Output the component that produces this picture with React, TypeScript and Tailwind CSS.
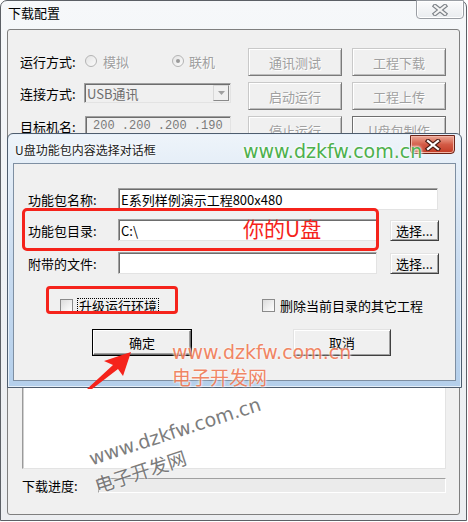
import React from "react";

const outerBtn =
  "flex h-[28px] w-[94px] items-center justify-center border border-[#c9c9c9] border-b-[#7a7a7a] border-r-[#7a7a7a] bg-[#f0f0f0] text-[#a0a0a0] shadow-[inset_1px_1px_0_#ffffff,inset_-1px_-1px_0_#bdbdbd] [text-shadow:1px_1px_0_#ffffff]";

const sunken =
  "border border-[#a0a0a0] border-b-[#e3e3e3] border-r-[#e3e3e3] shadow-[inset_1px_1px_0_#6d6d6d]";

function CloseX({ outline, fill }: { outline: string; fill: string }) {
  return (
    <svg width="16" height="12" viewBox="0 0 16 12">
      <path d="M3 2 L13 10 M13 2 L3 10" stroke={outline} strokeWidth="4.4" strokeLinecap="square" fill="none" />
      <path d="M3 2 L13 10 M13 2 L3 10" stroke={fill} strokeWidth="2.2" strokeLinecap="square" fill="none" />
    </svg>
  );
}

export default function App() {
  return (
    <div className="relative h-[522px] w-[468px] overflow-hidden bg-white font-['Noto_Sans_CJK_SC',sans-serif] text-[13px] leading-none text-black">
      {/* outer window */}
      <div className="flex h-[521px] w-[467px] flex-col rounded-t-[7px] border border-[#5c6066] bg-gradient-to-b from-[#f6f8fa] via-[#eef1f4] to-[#eceef1]">
        {/* title bar */}
        <div className="flex h-[28px] items-start">
          <span className="ml-[7px] mt-[5px] text-[13px] text-black">下载配置</span>
          <div className="ml-auto mr-[2px] mt-[-1px] flex h-[19px] w-[48px] items-center justify-center rounded-b-[4px] border border-[#9a9ea4] bg-gradient-to-b from-[#fbfbfc] to-[#e9ecef] shadow-[inset_0_0_0_1px_#ffffff]">
            <CloseX outline="#7d8288" fill="#f4f4f4" />
          </div>
        </div>
        {/* client area */}
        <div className="mx-[6px] mb-[5px] flex flex-1 flex-col rounded-[3px] border border-[#7f7f7f] bg-[#f0f0f0] pl-[12px] pt-[18px]">
          <div className="flex">
            <div className="flex w-[211px] flex-col gap-[6px]">
              <div className="flex h-[28px] items-center pb-[2px]">
                <span className="w-[64px]">运行方式:</span>
                <span className="ml-[1px] h-[12px] w-[12px] rounded-full border border-[#b4b4b4] bg-gradient-to-br from-[#e4e4e4] to-[#fbfbfb]" />
                <span className="ml-[6px] text-[#a0a0a0] [text-shadow:1px_1px_0_#ffffff]">模拟</span>
                <span className="ml-[43px] flex h-[12px] w-[12px] items-center justify-center rounded-full border border-[#b4b4b4] bg-gradient-to-br from-[#e4e4e4] to-[#fbfbfb]">
                  <span className="h-[4px] w-[4px] rounded-full bg-[#9a9a9a]" />
                </span>
                <span className="ml-[5px] text-[#a0a0a0] [text-shadow:1px_1px_0_#ffffff]">联机</span>
              </div>
              <div className="h-[28px] pt-[1px]">
                <div className="flex h-[20px] items-center">
                  <span className="w-[64px]">连接方式:</span>
                  <div className={`flex h-[20px] w-[147px] items-center bg-[#f0f0f0] ${sunken}`}>
                    <span className="ml-[2px] text-[#6d6d6d]">USB通讯</span>
                    <div className="ml-auto mr-[1px] flex h-[16px] w-[16px] items-center justify-center border border-[#d8d8d8] border-b-[#8a8a8a] border-r-[#8a8a8a] bg-[#f0f0f0]">
                      <svg width="7" height="4" viewBox="0 0 7 4"><path d="M0 0 H7 L3.5 4 Z" fill="#a0a0a0" /></svg>
                    </div>
                  </div>
                </div>
              </div>
              <div className="flex h-[20px] items-center">
                <span className="w-[65px]">目标机名:</span>
                <div className={`flex h-[20px] w-[146px] items-center bg-[#f0f0f0] pl-[7px] font-['Liberation_Mono',monospace] text-[12px] text-[#7a7a7a] ${sunken}`}>
                  <span className="whitespace-pre">200 .200 .200 .190</span>
                </div>
              </div>
            </div>
            <div className="ml-[17px] grid grid-cols-[94px_94px] gap-x-[10px] gap-y-[6px]">
              <div className={outerBtn}>通讯测试</div>
              <div className={outerBtn}>工程下载</div>
              <div className={outerBtn}>启动运行</div>
              <div className={outerBtn}>工程上传</div>
              <div className={outerBtn}>停止运行</div>
              <div className="flex h-[28px] w-[94px] items-center justify-center border border-[#6f6f6f] bg-[#f0f0f0] text-[#a0a0a0] shadow-[inset_1px_1px_0_#ffffff,inset_-1px_-1px_0_#bdbdbd] [text-shadow:1px_1px_0_#ffffff]">U盘包制作</div>
            </div>
          </div>
          <div className="ml-[2px] mt-[8px] h-[317px] w-[424px] border border-[#9a9a9a] border-b-[#e3e3e3] border-r-[#e3e3e3] bg-white shadow-[inset_1px_1px_0_#d0d0d0]" />
          <div className="ml-[2px] mt-[9px] flex items-center">
            <span className="w-[76px]">下载进度:</span>
            <div className="h-[15px] w-[348px] border border-[#a0a0a0] border-b-[#ffffff] border-r-[#ffffff] bg-[#ebebeb]" />
          </div>
        </div>
      </div>

      {/* dialog window */}
      <div className="absolute left-[7px] top-[133px] flex h-[255px] w-[455px] flex-col rounded-t-[6px] border border-[#4e5d6e] bg-gradient-to-b from-[#eef4fa] via-[#cadcf0] to-[#b4cfeb] shadow-[inset_0_0_0_1px_#e6f0fa]">
        <div className="flex h-[29px] items-start">
          <span className="ml-[7px] mt-[10px] text-[12px] text-[#1a1a1a] [text-shadow:0_0_4px_#ffffff,0_0_4px_#ffffff]">U盘功能包内容选择对话框</span>
          <div className="ml-auto mr-[6px] mt-[1px] flex h-[19px] w-[45px] items-center justify-center rounded-b-[4px] border border-[#6b2418] bg-gradient-to-b from-[#eba898] via-[#d35a45] to-[#c23a24] shadow-[inset_0_0_0_1px_#f3b6a8]">
            <CloseX outline="#4a1c14" fill="#ffffff" />
          </div>
        </div>
        <div className="mx-[5px] flex h-[218px] flex-col border border-[#7e8fa2] bg-[#f0f0f0] pl-[14px]">
          <div className="mt-[24px] flex h-[22px] items-center">
            <span className="w-[90px]">功能包名称:</span>
            <div className={`flex h-[22px] w-[320px] items-center bg-white pl-[2px] ${sunken}`}>E系列样例演示工程800x480</div>
          </div>
          <div className="mt-[9px] flex h-[22px] items-center">
            <span className="w-[90px]">功能包目录:</span>
            <div className={`flex h-[22px] w-[259px] items-center bg-white pl-[2px] ${sunken}`}>C:\</div>
            <div className="ml-[13px] flex h-[21px] w-[49px] items-center justify-center border border-[#e3e3e3] border-b-[#404040] border-r-[#404040] bg-[#f0f0f0] shadow-[inset_1px_1px_0_#ffffff,inset_-1px_-1px_0_#a0a0a0]">选择...</div>
          </div>
          <div className="mt-[11px] flex h-[22px] items-center">
            <span className="w-[90px]">附带的文件:</span>
            <div className={`h-[22px] w-[259px] bg-white ${sunken}`} />
            <div className="ml-[13px] flex h-[21px] w-[49px] items-center justify-center border border-[#e3e3e3] border-b-[#404040] border-r-[#404040] bg-[#f0f0f0] shadow-[inset_1px_1px_0_#ffffff,inset_-1px_-1px_0_#a0a0a0]">选择...</div>
          </div>
          <div className="mt-[24px] flex h-[14px] items-center">
            <span className="ml-[32px] h-[13px] w-[13px] border border-[#8a8a8a] bg-gradient-to-br from-[#dcdcdc] to-[#ffffff]" />
            <span className="ml-[4px] flex h-[15px] items-center border border-dotted border-black px-[1px]">升级运行环境</span>
            <span className="ml-[103px] h-[13px] w-[13px] border border-[#8a8a8a] bg-gradient-to-br from-[#dcdcdc] to-[#ffffff]" />
            <span className="ml-[5px]">删除当前目录的其它工程</span>
          </div>
          <div className="mt-[17px] flex">
            <div className="ml-[64px] flex h-[27px] w-[100px] border border-black bg-[#f0f0f0]">
              <div className="flex flex-1 items-center justify-center border border-[#ffffff] border-b-[#696969] border-r-[#696969] shadow-[inset_-1px_-1px_0_#a0a0a0]">确定</div>
            </div>
            <div className="ml-[101px] flex h-[27px] w-[98px] items-center justify-center border border-[#e3e3e3] border-b-[#404040] border-r-[#404040] bg-[#f0f0f0] shadow-[inset_1px_1px_0_#ffffff,inset_-1px_-1px_0_#a0a0a0]">取消</div>
          </div>
        </div>
      </div>

      {/* annotations */}
      <div className="absolute left-[22px] top-[208px] h-[43px] w-[357px] rounded-[5px] border-[3px] border-[#f5231b]" />
      <div className="absolute left-[46px] top-[286px] h-[28px] w-[132px] rounded-[4px] border-[3px] border-[#f5231b]" />
      <div className="absolute left-[243px] top-[218px] text-[21px] leading-none text-[#f5231b]">你的U盘</div>

      <div className="absolute left-[243px] top-[142px] font-['DejaVu_Sans',sans-serif] text-[19px] leading-none text-[#4db04d] [text-shadow:0_0_2px_#ffffff,0_0_3px_#ffffff,0_0_4px_#ffffff]">www.dzkfw.com.cn</div>

      <div className="absolute left-[172px] top-[343px] font-['DejaVu_Sans',sans-serif] text-[19px] leading-none text-[#f07a55] opacity-90 [text-shadow:0_0_2px_#ffffff,0_0_3px_#ffffff]">www.dzkfw.com.cn</div>
      <div className="absolute left-[172px] top-[367px] text-[19px] leading-none text-[#f07a55] opacity-90 [text-shadow:0_0_2px_#ffffff,0_0_3px_#ffffff]">电子开发网</div>

      <div className="absolute left-[82px] top-[422px] w-[186px] -rotate-[18deg] text-center font-['DejaVu_Sans',sans-serif] text-[19px] leading-none text-[#6f6f6f] opacity-90 [text-shadow:0_0_2px_#ffffff,0_0_2px_#ffffff]">www.dzkfw.com.cn</div>
      <div className="absolute left-[90px] top-[461px] w-[100px] -rotate-[18deg] text-center text-[19px] leading-none text-[#6f6f6f] opacity-90 [text-shadow:0_0_2px_#ffffff,0_0_2px_#ffffff]">电子开发网</div>

      <svg className="absolute left-0 top-0" width="468" height="522" viewBox="0 0 468 522">
        <polygon points="131,352 104,361 113,365 87,389 92,389 118,369 123,376" fill="#f5231b" />
      </svg>
    </div>
  );
}
